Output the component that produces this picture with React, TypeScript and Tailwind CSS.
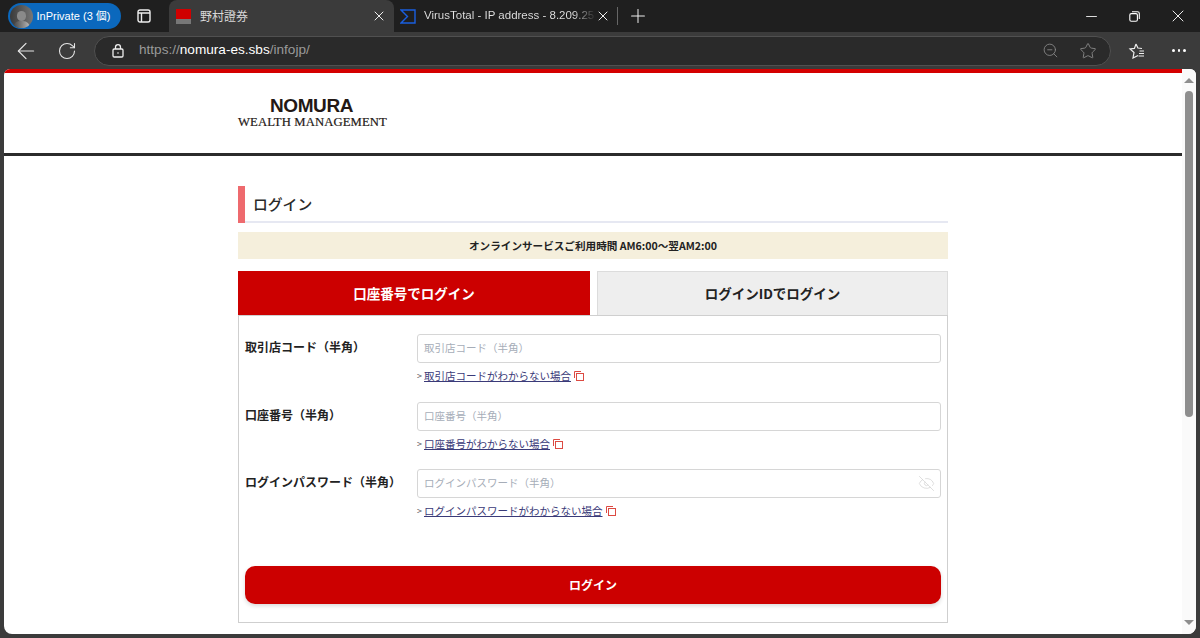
import { Plus, X, ArrowLeft, RotateCw, ZoomOut, Star, Minus, EyeOff } from 'lucide-react'

const jp = '"Noto Sans CJK JP", "Liberation Sans", sans-serif'

function CopyIcon() {
  return (
    <svg width="10" height="10" viewBox="0 0 10 10" fill="none" stroke="#dc4a42" strokeWidth="1" className="ml-[3px] inline-block">
      <path d="M0.5 7V0.5H7" />
      <rect x="2.5" y="2.5" width="7" height="7" />
    </svg>
  )
}

function Field({ label, linkText, password }: { label: string; linkText: string; password?: boolean }) {
  return (
    <div className="flex mb-[18.5px]">
      <div className="w-[172px] pt-[4px] text-[12px] leading-[18px] font-bold text-[#222]">{label}</div>
      <div className="flex-1">
        <div className="h-[29px] flex items-center justify-between border border-[#d6d6d6] rounded-[3px] pl-[6px] pr-[5px] pb-[1px] text-[10.5px] text-[#a6adb8] bg-white">
          <span>{label}</span>
          {password && <EyeOff size={17} strokeWidth={1} className="text-[#d2d2d2]" />}
        </div>
        <div className="h-[14px] mt-[6px] flex items-center text-[10.5px] leading-[14px] text-[#555]">
          <span className="text-[9px] w-[7px]">&gt;</span>
          <span className="text-[#3a3a78] underline">{linkText}</span>
          <CopyIcon />
        </div>
      </div>
    </div>
  )
}

export default function App() {
  return (
    <div className="w-[1200px] h-[638px] overflow-hidden flex flex-col bg-[#3b3b3b]" style={{ fontFamily: jp }}>
      {/* tab strip */}
      <div className="h-[32px] shrink-0 bg-[#1f1f1f] flex items-center text-[#e8e8e8] text-[12px]">
        <div className="ml-[8px] w-[113px] h-[26px] rounded-full bg-[#0b68bd] flex items-center">
          <div className="w-[23px] h-[23px] ml-[1.5px] rounded-full bg-gradient-to-r from-[#3a3a3a] to-[#777] flex flex-col items-center justify-end overflow-hidden">
            <div className="w-[9px] h-[10px] rounded-full bg-[#8a8a8a]" />
            <div className="w-[17px] h-[7px] rounded-t-full bg-gradient-to-r from-[#444] to-[#bbb]" />
          </div>
          <span className="ml-[4px] text-[11px] text-white" style={{ fontFamily: '"Liberation Sans", "Noto Sans CJK TC", sans-serif' }}>InPrivate (3 個)</span>
        </div>
        <svg width="14" height="14" viewBox="0 0 14 14" fill="none" stroke="#eee" strokeWidth="1.4" className="ml-[16px]">
          <rect x="1" y="1" width="12" height="12" rx="2" />
          <path d="M1 4h12M4.5 4V13" />
        </svg>
        <div className="ml-[18px] w-[225px] h-[32px] self-end bg-[#3b3b3b] rounded-t-[8px] flex items-center">
          <div className="ml-[7px] w-[15px] h-[15px] bg-[#d00000] flex flex-col justify-end">
            <div className="h-[5px] bg-[#777]" />
          </div>
          <span className="ml-[9px] text-[12px] text-[#d8d8d8] flex-1">野村證券</span>
          <X size={16} strokeWidth={1.5} className="mr-[7px] text-[#eee]" />
        </div>
        <svg width="16" height="15" viewBox="0 0 16 15" fill="none" stroke="#1a5fe0" strokeWidth="1.4" className="ml-[6px] mt-[1px]">
          <path d="M1 1h14v13H1L7.5 7.5z" />
        </svg>
        <span className="ml-[8px] w-[170px] whitespace-nowrap text-[11.5px] text-transparent bg-clip-text bg-gradient-to-r from-[#e4e4e4] from-[88%] to-[#333]" style={{ fontFamily: '"Liberation Sans", sans-serif' }}>VirusTotal - IP address - 8.209.254</span>
        <X size={16} strokeWidth={1.5} className="ml-[1px] text-[#eee]" />
        <div className="ml-[6px] w-px h-[18px] bg-[#666]" />
        <Plus size={22} strokeWidth={1.1} className="ml-[9px] text-[#eee]" />
        <div className="flex-1" />
        <Minus size={17} strokeWidth={1.2} className="mr-[29px] text-white" />
        <svg width="11" height="11" viewBox="0 0 11 11" fill="none" stroke="#fff" strokeWidth="1.1" className="mr-[28px]">
          <rect x="0.8" y="2.6" width="7.6" height="7.6" rx="1.5" />
          <path d="M3 .7h5.5a1.8 1.8 0 0 1 1.8 1.8V8" />
        </svg>
        <X size={20} strokeWidth={1.1} className="mr-[12px] text-white" />
      </div>

      {/* toolbar */}
      <div className="h-[37px] shrink-0 flex items-center text-[#e6e6e6]">
        <ArrowLeft size={26} strokeWidth={1.1} className="ml-[13px]" />
        <RotateCw size={20} strokeWidth={1.3} className="ml-[18px]" />
        <div className="ml-[17px] w-[1017px] h-[30px] rounded-full border-[1.5px] border-[#505050] bg-[#2a2a2a] flex items-center">
          <svg width="12" height="14" viewBox="0 0 12 14" fill="none" stroke="#eee" strokeWidth="1.3" className="ml-[17px]">
            <rect x="1" y="5" width="10" height="8" rx="1.2" />
            <path d="M3.5 5V3.2a2.5 2.5 0 0 1 5 0V5" />
            <circle cx="6" cy="9" r="0.8" fill="#eee" stroke="none" />
          </svg>
          <span className="ml-[15px] text-[13.6px] flex-1 text-[#9a9a9a]" style={{ fontFamily: '"Liberation Sans", sans-serif' }}>
            https://<span className="text-white">nomura-es.sbs</span>/infojp/
          </span>
          <ZoomOut size={17} strokeWidth={1.2} className="text-[#8a8a8a]" />
          <Star size={18} strokeWidth={1.2} className="ml-[20px] mr-[13px] text-[#8a8a8a]" />
        </div>
        <svg width="17" height="16" viewBox="0 0 17 16" fill="none" stroke="#eee" strokeWidth="1.2" className="ml-[17px]">
          <path d="M8 1l1.9 4 4.1.5M10 12.5l-5 2.5 1-5.5L2 6l4.4-.6L8 1" />
          <path d="M11.5 8h4.5M11 10.5h5M10.5 13h5.5" />
        </svg>
        <div className="ml-[27px] flex gap-[3px]">
          <div className="w-[2.5px] h-[2.5px] bg-white rounded-full" />
          <div className="w-[2.5px] h-[2.5px] bg-white rounded-full" />
          <div className="w-[2.5px] h-[2.5px] bg-white rounded-full" />
        </div>
      </div>

      {/* page */}
      <div className="h-[565px] shrink-0 mx-[4px] flex bg-white rounded-t-[6px] rounded-b-[8px] overflow-hidden">
        <div className="w-[1178px] shrink-0 h-full overflow-hidden">
          <div className="h-[4px] bg-[#d40000]" />
          <div className="h-[80px] pl-[234px] pt-[24px]">
            <div className="w-[149px] pr-[2px] text-center text-[#231815] font-bold text-[19px] leading-[17px] tracking-[-0.4px]" style={{ fontFamily: '"Liberation Sans", sans-serif' }}>NOMURA</div>
            <div className="w-[149px] mt-[2px] whitespace-nowrap text-[#231815] text-[12.7px] leading-[13px] tracking-[0.1px] [-webkit-text-stroke:0.2px_#231815]" style={{ fontFamily: '"Liberation Serif", serif' }}>WEALTH MANAGEMENT</div>
          </div>
          <div className="h-[3px] bg-[#2b2b2b]" />

          <div className="w-[710px] ml-[234px] mt-[30px]">
            <div className="h-[37px] flex items-center border-l-[7px] border-[#ee6a6e] relative">
              <span className="pl-[8px] text-[14.8px] text-[#2a2a2a] font-medium">ログイン</span>
              <div className="absolute left-0 right-0 bottom-0 h-[2px] bg-[#e6e8f2]" />
            </div>
            <div className="mt-[9px] h-[27px] bg-[#f5efdc] flex items-center justify-center text-[10.6px] font-bold text-[#222]">
              オンラインサービスご利用時間 AM6:00～翌AM2:00
            </div>
            <div className="mt-[12px] flex justify-between">
              <div className="w-[352px] h-[44px] bg-[#cc0000] text-white font-bold text-[13.5px] flex items-center justify-center">口座番号でログイン</div>
              <div className="w-[351px] h-[44px] bg-[#eeeeee] border border-[#dcdcdc] border-b-0 text-[#222] font-bold text-[13.5px] flex items-center justify-center">ログインIDでログイン</div>
            </div>
            <div className="h-[308px] border border-[#cfcfcf] px-[6px] pt-[18px]">
              <Field label="取引店コード（半角）" linkText="取引店コードがわからない場合" />
              <Field label="口座番号（半角）" linkText="口座番号がわからない場合" />
              <Field label="ログインパスワード（半角）" linkText="ログインパスワードがわからない場合" password />
              <button className="mt-[29.5px] w-full h-[38px] rounded-[10px] bg-[#cc0000] text-white font-bold text-[12px] shadow-[0_2px_4px_rgba(0,0,0,0.15)]">ログイン</button>
            </div>
          </div>
        </div>

        {/* scrollbar */}
        <div className="flex-1 bg-[#fafafa] flex flex-col items-center pt-[9px] pb-[9px]">
          <div className="w-0 h-0 border-x-[5px] border-x-transparent border-b-[5px] border-b-[#8e8e8e]" />
          <div className="mt-[8px] w-[8px] h-[326px] rounded-full bg-[#8e8e8e]" />
          <div className="flex-1" />
          <div className="w-0 h-0 border-x-[5px] border-x-transparent border-t-[5px] border-t-[#8e8e8e]" />
        </div>
      </div>
    </div>
  )
}
